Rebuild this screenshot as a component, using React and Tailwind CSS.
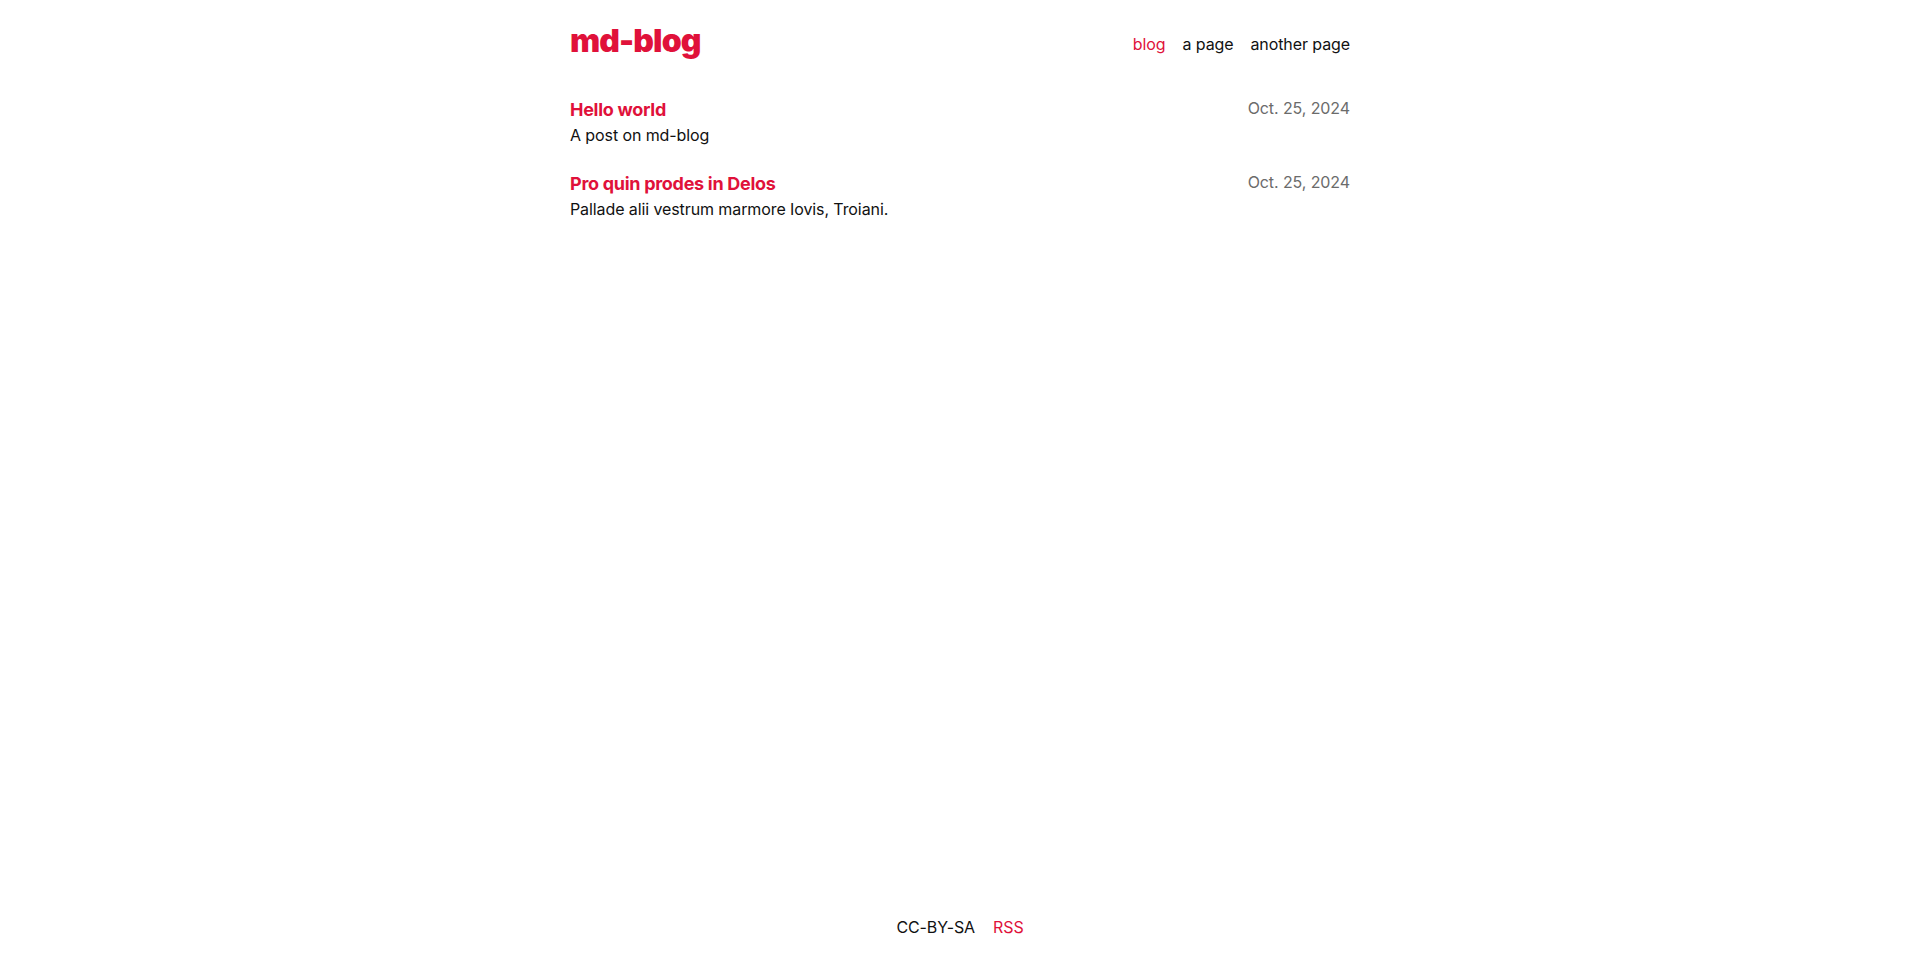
export default function App() {
  const posts = [
    { title: "Hello world", desc: "A post on md-blog", date: "Oct. 25, 2024" },
    { title: "Pro quin prodes in Delos", desc: "Pallade alii vestrum marmore Iovis, Troiani.", date: "Oct. 25, 2024" },
  ];
  return (
    <div className="min-h-screen flex flex-col bg-white text-[#111] tracking-[-0.006em] font-['Inter','Liberation_Sans',sans-serif]">
      <div className="w-[780px] mx-auto flex-1">
        <header className="pt-[21px] flex justify-between items-start">
          <a className="text-[32px] leading-[40px] font-black text-[#e0113a] tracking-[-0.028em]">md-blog</a>
          <nav className="mt-[11px] flex gap-[17px] text-[16px] leading-6">
            <a className="text-[#e0113a]">blog</a>
            <a>a page</a>
            <a>another page</a>
          </nav>
        </header>
        <main className="mt-[35px] flex flex-col gap-[23px]">
          {posts.map((p, i) => (
            <article key={i}>
              <div className="flex justify-between items-start">
                <h2 className="text-[18px] leading-[27px] font-bold tracking-[-0.016em] text-[#e0113a]">{p.title}</h2>
                <span className="text-[16px] leading-6 text-[#6b6b6b]">{p.date}</span>
              </div>
              <p className="text-[16px] leading-6">{p.desc}</p>
            </article>
          ))}
        </main>
      </div>
      <footer className="pb-[16px] flex justify-center gap-[18px] text-[16px] leading-6">
        <span>CC-BY-SA</span>
        <a className="text-[#e0113a]">RSS</a>
      </footer>
    </div>
  );
}
